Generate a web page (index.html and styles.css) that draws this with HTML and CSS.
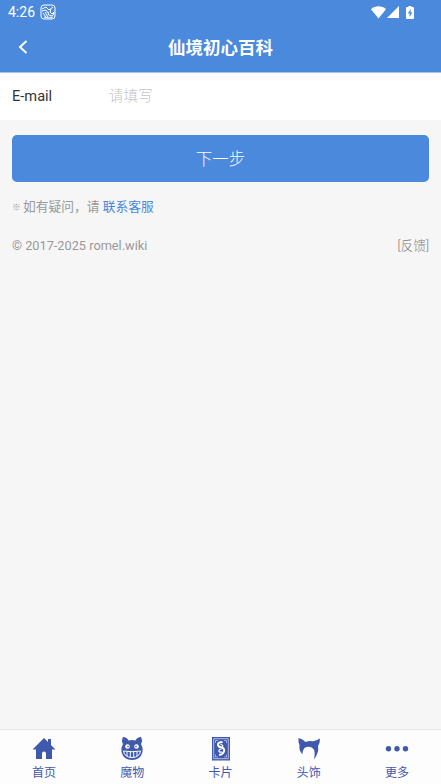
FILE: index.html
```html
<!DOCTYPE html>
<html lang="zh-CN">
<head>
    <meta charset="UTF-8">
    <meta name="viewport" content="width=device-width, initial-scale=1.0">
    <title>仙境初心百科</title>
    <link rel="stylesheet" href="styles.css">
</head>
<body>
    <div class="status-bar">
        <span class="time">4:26</span>
        <svg class="app-icon" viewBox="0 0 16 16" fill="none" stroke="#fff">
            <rect x="1" y="1" width="14" height="14" rx="3"/>
            <path d="M2 5l4-2 3 3 4-3M2 7l4-1 2 3M3 9l3 4M5 8l3 5M8 8q0 4 3 4t3-4l-2 2-2-2 1-3M4 13l5 1 4-1"/>
        </svg>
        <div class="status-icons">
            <svg class="wifi" viewBox="0 0 15 13" fill="#fff"><path d="M0 3.200C4-.6 11-.6 15 3.200L7.500 12.500z"/></svg>
            <svg class="signal" viewBox="0 0 12 12" fill="#fff"><path d="M12 0v12H0z"/></svg>
            <svg class="battery" viewBox="0 0 8 13">
                <path fill="#fff" d="M2.500 0h3v1H7q1 0 1 1v10q0 1-1 1H1q-1 0-1-1V2q0-1 1-1h1.500z"/>
                <path fill="#4a89dc" d="M4.800 3L1.700 7.500h1.900V11l2.800-4.500H4.600z"/>
            </svg>
        </div>
    </div>
    <header class="header">
        <a class="back" href="#">
            <svg viewBox="0 0 10 14" fill="none" stroke="#fff" stroke-width="2"><path d="M8.500 1L2 7l6.500 6"/></svg>
        </a>
        <h1>仙境初心百科</h1>
    </header>
    <main class="content">
        <label class="field">
            <span class="field-label">E-mail</span>
            <input type="text" placeholder="请填写">
        </label>
        <button class="next-button">下一步</button>
        <p class="tip"><span class="mark">※</span>如有疑问，请 <a href="#">联系客服</a></p>
        <div class="copyright">
            <span>© 2017-2025 romel.wiki</span>
            <span class="feedback">[反馈]</span>
        </div>
    </main>
    <nav class="tabbar">
        <a class="tab" href="#">
            <svg viewBox="0 0 24 24" fill="currentColor"><path d="M12 1L.5 12.500H4V22h6v-5.500q0-2 2-2t2 2V22h6v-9.500h3.500L19 8V2h-3v3z"/></svg>
            <span>首页</span>
        </a>
        <a class="tab" href="#">
            <svg viewBox="0 0 24 24">
                <path fill="currentColor" d="M3 0q4 0 5.500 3.500 3.500-1 7 0Q17 0 21 0q2 4 0 7 2 3 1.500 8-2 8-10.500 8T1.500 15Q1 10 3 7 1 4 3 0z"/>
                <circle cx="7.500" cy="9.500" r="2.300" fill="#fff"/>
                <circle cx="16.500" cy="9.500" r="2.300" fill="#fff"/>
                <circle cx="8" cy="9.500" r=".8" fill="currentColor"/>
                <circle cx="16" cy="9.500" r=".8" fill="currentColor"/>
                <path fill="none" stroke="#fff" stroke-width="1" d="M3.500 14q8.500 1.500 17 0-1 6.500-8.500 6.500T3.500 14z"/>
                <path stroke="#fff" fill="none" stroke-width="1" d="M7 15v4M10.300 15v5M13.700 15v5M17 15v4"/>
            </svg>
            <span>魔物</span>
        </a>
        <a class="tab" href="#">
            <svg viewBox="0 0 24 24">
                <path fill="currentColor" d="M3 0h18v23.500H3z"/>
                <path fill="none" stroke="#fff" stroke-width=".6" d="M4.700 1.700h14.600v20H4.700z"/>
                <path fill="none" stroke="#fff" stroke-width=".5" d="M6.500 6V3.500H9M15 3.500h2.500V6M6.500 17.500V20H9M15 20h2.500v-2.500"/>
                <path fill="none" stroke="#fff" stroke-width="2" d="M13.500 5q-4.500 0-4.500 2.500t3.500 3q3.500 1 2.500 4t-5 3.500"/>
                <path fill="none" stroke="#fff" stroke-width="1.200" d="M11.500 7.500q3 0 2 3M12.500 12q-3 0-2.500 2.500 1 1 3 .5"/>
            </svg>
            <span>卡片</span>
        </a>
        <a class="tab" href="#">
            <svg viewBox="0 0 24 24" fill="currentColor"><path d="M1.500 1q4.500 1 7 4 3.500-1.500 7.500-.8 3.500-.4 7-2.700 0 5-2 7.500 1.500 6-4 13.500 1.500-8-.5-10.500-2.500-3-7-2-4 1-4 7.500Q1.500 13 2.500 8 1 5 1.500 1z"/></svg>
            <span>头饰</span>
        </a>
        <a class="tab" href="#">
            <svg viewBox="0 0 24 24" fill="currentColor"><circle cx="3.500" cy="11.700" r="2.700"/><circle cx="12" cy="11.700" r="2.700"/><circle cx="20.500" cy="11.700" r="2.700"/></svg>
            <span>更多</span>
        </a>
    </nav>
</body>
</html>
```

FILE: styles.css
```css
* {
    box-sizing: border-box;
}
body {
    display: flex;
    flex-direction: column;
    height: 100vh;
    margin: 0;
    background-color: #f6f6f6;
    color: #333;
    font-family: Roboto, 'Noto Sans CJK SC', sans-serif;
}
a {
    color: #4a89dc;
    text-decoration: none;
}
.status-bar {
    display: flex;
    align-items: center;
    height: 24px;
    padding: 0 27px 0 8px;
    background-color: #4a89dc;
    color: #fff;
}
.time {
    width: 32px;
    font-size: 14px;
    line-height: 24px;
}
.app-icon {
    width: 16px;
    height: 16px;
}
.status-icons {
    display: flex;
    align-items: center;
    margin-left: auto;
}
.wifi {
    width: 15px;
    height: 13px;
}
.signal {
    width: 12px;
    height: 12px;
    margin: 0 7px 0 1px;
}
.battery {
    width: 8px;
    height: 13px;
}
.header {
    display: grid;
    grid-template-columns: 46px 1fr 46px;
    align-items: center;
    height: 49px;
    background-color: #4a89dc;
    border-bottom: 1px solid #a0c2f0;
}
.back {
    display: flex;
    justify-content: center;
    padding-bottom: 2px;
}
.back svg {
    width: 10px;
    height: 14px;
}
.header h1 {
    margin: 0;
    color: #fff;
    font-size: 17.5px;
    font-weight: bold;
    line-height: 26px;
    text-align: center;
}
.content {
    flex: 1;
}
.field {
    display: flex;
    align-items: center;
    height: 47px;
    padding: 0 12px 2px;
    background-color: #fff;
    font-size: 14.6px;
}
.field-label {
    width: 97px;
}
.field input {
    flex: 1;
    min-width: 0;
    padding: 0;
    border: none;
    outline: none;
    font: inherit;
}
.field input::placeholder {
    color: #c4c4c4;
    font-weight: 300;
}
.next-button {
    display: block;
    width: calc(100% - 24px);
    height: 47px;
    margin: 15px 12px 0;
    padding: 0 0 2px;
    border: none;
    border-radius: 5px;
    background-color: #4a89dc;
    color: #fff;
    font-family: inherit;
    font-size: 16.5px;
    font-weight: 300;
}
.tip {
    margin: 15px 12px 0;
    color: #999;
    font-size: 12.75px;
    line-height: 20px;
}
.mark {
    display: inline-block;
    width: 11px;
    font-size: 8.5px;
    font-weight: bold;
    line-height: 1;
    vertical-align: 1px;
}
.copyright {
    display: flex;
    justify-content: space-between;
    margin: 19px 12px 0;
    color: #999;
    font-size: 12.75px;
    line-height: 20px;
}
.feedback {
    font-weight: 300;
    color: #808080;
}
.tabbar {
    display: flex;
    height: 55px;
    border-top: 1px solid #e5e5e5;
    background-color: #fdfdfd;
}
.tab {
    flex: 1;
    display: flex;
    flex-direction: column;
    align-items: center;
    padding-top: 7px;
    color: #3f59ad;
    font-size: 12px;
    line-height: 18px;
}
.tab svg {
    width: 24px;
    height: 24px;
    margin-bottom: 3px;
}
```
